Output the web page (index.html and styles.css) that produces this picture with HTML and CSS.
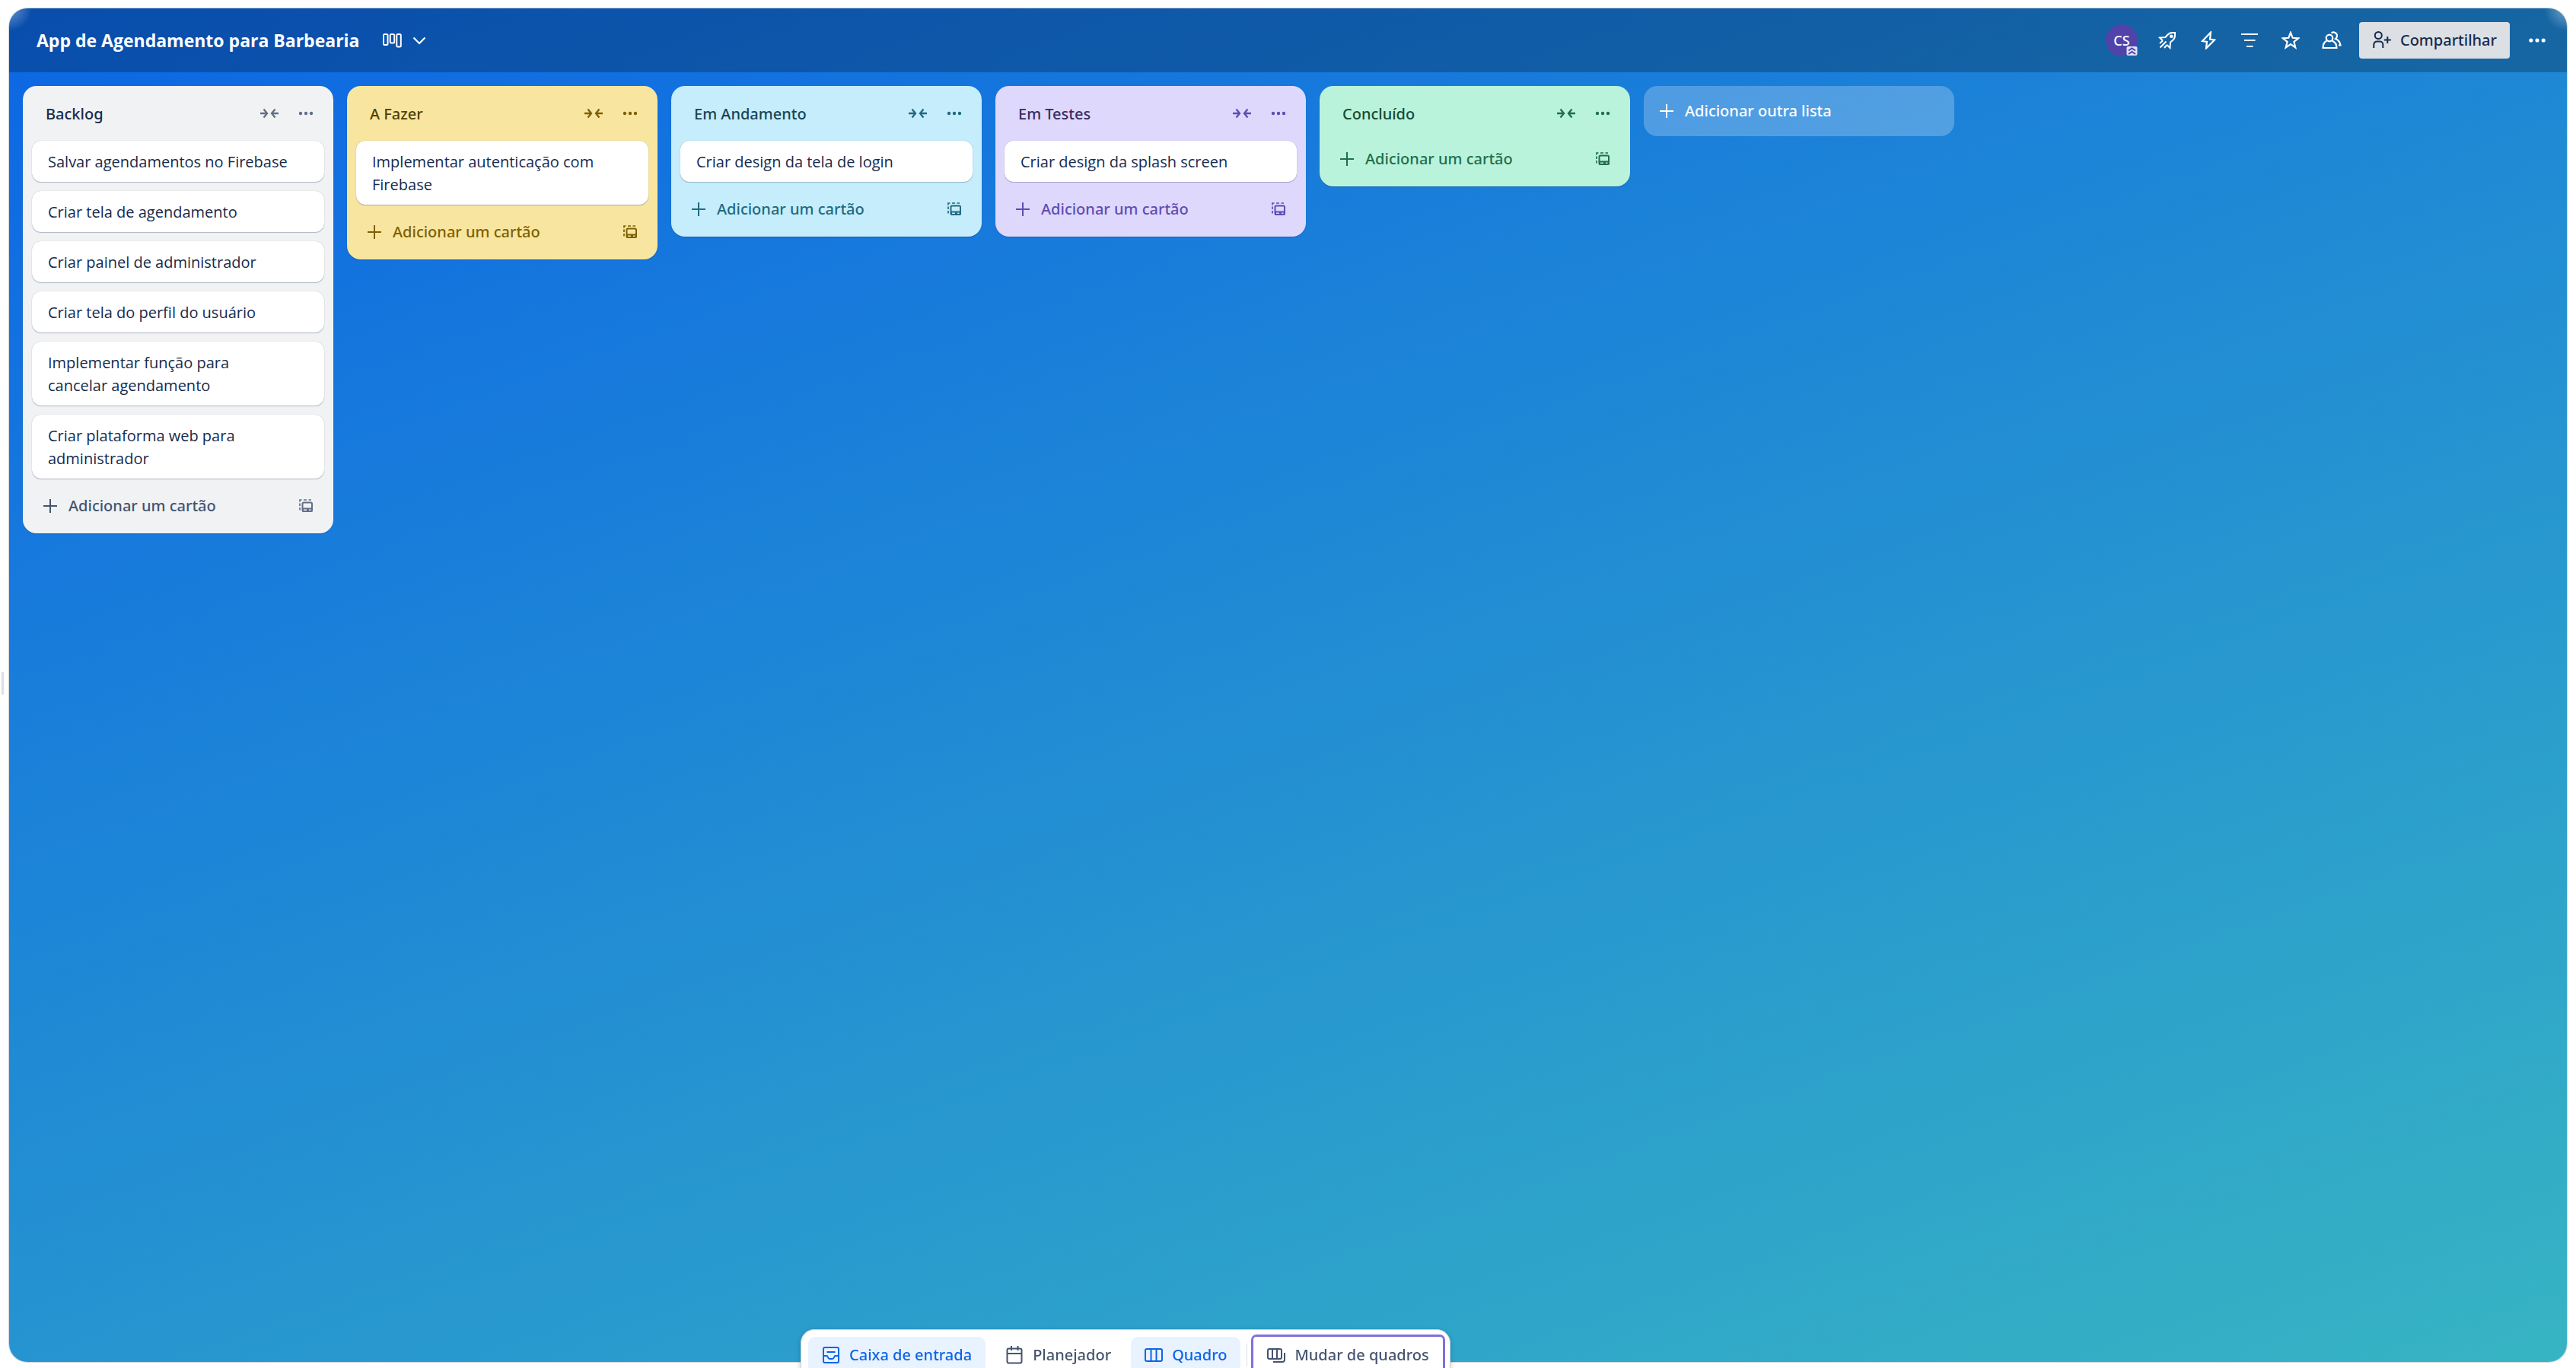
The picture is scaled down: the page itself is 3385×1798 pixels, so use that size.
FILE: index.html
```html
<!DOCTYPE html>
<html lang="pt-BR">
<head>
<meta charset="utf-8">
<meta name="viewport" content="width=device-width, initial-scale=1">
<title>App de Agendamento para Barbearia</title>
<link rel="stylesheet" href="styles.css">
</head>
<body>
<svg class="sprite" aria-hidden="true">
  <symbol id="i-collapse" viewBox="0 0 24 24"><path d="M0 12h8M4.500 6.500L9 12l-4.500 5.500M24 12h-8M19.500 6.500L15 12l4.500 5.500" stroke-width="2.300"/></symbol>
  <symbol id="i-dots" viewBox="0 0 24 24"><g fill="currentColor" stroke="none"><circle cx="5" cy="12" r="2.200"/><circle cx="12" cy="12" r="2.200"/><circle cx="19" cy="12" r="2.200"/></g></symbol>
  <symbol id="i-plus" viewBox="0 0 24 24"><path d="M12 3v18M3 12h18" stroke-width="2"/></symbol>
  <symbol id="i-template" viewBox="0 0 24 24"><path d="M4 17.500v-3.500M4 12V8.500M4 6.500V4h2.500M9 4h4M15.500 4H19" stroke-width="1.700"/><rect x="7.500" y="7.500" width="12.500" height="11.500" rx="1.500" stroke-width="2"/><path d="M7 14.500h13.500v5H7zM9 16.500v1.500h4v-1.500zM16 16.500v1.500h2.500v-1.500z" fill="currentColor" fill-rule="evenodd" stroke="none"/></symbol>
  <symbol id="i-board" viewBox="0 0 27 24"><g stroke-width="2"><rect x="2" y="4" width="5.500" height="14" rx="1.500"/><rect x="10.700" y="4" width="5.500" height="11.500" rx="1.500"/><rect x="19.300" y="4" width="5.500" height="16.500" rx="1.500"/></g></symbol>
  <symbol id="i-chevron" viewBox="0 0 24 24"><path d="M4.500 8.500l7.500 7.500 7.500-7.500" stroke-width="2.200"/></symbol>
  <symbol id="i-rocket" viewBox="0 0 24 24"><g stroke-width="2"><path d="M6 12.500L2 8.500l7.500-.5L12 5c2-2.300 4-3 6.500-3H22v3.500c0 2.500-.8 4.500-3 6.500l-3 2.500-.5 7.500-4-4"/><path d="M6 12.500l-4 3.500M10.500 13.500L2.500 21.500M11.500 18L8 22"/><circle cx="17.300" cy="6.800" r="1.300"/></g></symbol>
  <symbol id="i-bolt" viewBox="0 0 24 24"><path d="M15 1.500L4 13l6 1-1 8.500L20 11.500l-6-1z" stroke-width="2.200"/></symbol>
  <symbol id="i-filter" viewBox="0 0 24 24"><path d="M1 4h22M5 12h14.500M8 20h8.500" stroke-width="2.200"/></symbol>
  <symbol id="i-star" viewBox="0 0 24 24"><path d="M12 1.800l2.700 7 7.500.4-5.800 4.700 1.900 7.600L12 17.200l-6.300 4.300 1.900-7.600L1.800 9.200l7.500-.4z" stroke-width="2.200"/></symbol>
  <symbol id="i-people" viewBox="0 0 26 24"><g stroke-width="2.200"><circle cx="10" cy="9" r="4.300"/><path d="M6.500 12.500C3.500 14 1.500 17.500 1.500 22h18c0-4.500-2.500-8-6-9.500"/><path d="M12.500 2.500c3-2.300 7.500-.5 7.500 3.500 0 1.800-.7 3-2 4 3.500 1.500 6 4.500 6.500 8.500h-2.500"/></g></symbol>
  <symbol id="i-invite" viewBox="0 0 24 24"><path d="M1.300 22v-4.500a4 4 0 0 1 4-4h4a4 4 0 0 1 4 4V22M19.300 7v9M14.800 11.500h9" stroke-width="2"/><circle cx="7.300" cy="5.500" r="4.500" stroke-width="2"/></symbol>
  <symbol id="i-inbox" viewBox="0 0 24 24"><g stroke-width="2"><rect x="2" y="2" width="20" height="20" rx="2"/><path d="M6.500 8h11M2 13h4.500c1.500 0 1.500 4 3.500 4h4c2 0 2-4 3.500-4H22"/></g></symbol>
  <symbol id="i-calendar" viewBox="0 0 24 24"><g stroke-width="2"><rect x="2.500" y="3.500" width="19" height="19" rx="2"/><path d="M2.500 10h19M8 0v6M16.500 0v6"/></g></symbol>
  <symbol id="i-columns" viewBox="0 0 24 24"><g stroke-width="2"><rect x="1" y="4" width="22" height="16" rx="2"/><path d="M8.500 4v16M15.500 4v16"/></g></symbol>
  <symbol id="i-switch" viewBox="0 0 24 24"><g stroke-width="2"><rect x="1" y="4" width="18" height="13" rx="2"/><path d="M7 4v13M13 4v13M23 9v9a3 3 0 0 1-3 3H8"/></g></symbol>
</svg>

<span class="drag-handle"></span>

<main class="board">
  <header class="topbar">
    <h1 class="board-name">App de Agendamento para Barbearia</h1>
    <button class="view-switch" type="button" aria-label="Visualizações">
      <svg class="icon icon-board"><use href="#i-board"/></svg>
      <svg class="icon"><use href="#i-chevron"/></svg>
    </button>
    <div class="tools">
      <button class="avatar" type="button" aria-label="Membro CS">CS
        <svg class="avatar-badge" viewBox="0 0 14 12"><rect width="14" height="12" rx="2"/><path d="M2.500 5.500L7 2.500l4.500 3M2.500 10L7 7l4.500 3"/></svg>
      </button>
      <button class="icon-btn" type="button" aria-label="Power-Ups"><svg class="icon"><use href="#i-rocket"/></svg></button>
      <button class="icon-btn" type="button" aria-label="Automação"><svg class="icon"><use href="#i-bolt"/></svg></button>
      <button class="icon-btn" type="button" aria-label="Filtros"><svg class="icon"><use href="#i-filter"/></svg></button>
      <button class="icon-btn" type="button" aria-label="Favoritar"><svg class="icon"><use href="#i-star"/></svg></button>
      <button class="icon-btn" type="button" aria-label="Visibilidade"><svg class="icon icon-people"><use href="#i-people"/></svg></button>
      <button class="share" type="button"><svg class="icon"><use href="#i-invite"/></svg>Compartilhar</button>
      <button class="icon-btn" type="button" aria-label="Menu"><svg class="icon icon-menu"><use href="#i-dots"/></svg></button>
    </div>
  </header>

  <div class="lists">
    <section class="list">
      <header class="list-head">
        <h2 class="list-name">Backlog</h2>
        <button class="icon-btn" type="button" aria-label="Recolher lista"><svg class="icon"><use href="#i-collapse"/></svg></button>
        <button class="icon-btn" type="button" aria-label="Ações da lista"><svg class="icon"><use href="#i-dots"/></svg></button>
      </header>
      <ol class="cards">
        <li class="card">Salvar agendamentos no Firebase</li>
        <li class="card">Criar tela de agendamento</li>
        <li class="card">Criar painel de administrador</li>
        <li class="card">Criar tela do perfil do usuário</li>
        <li class="card">Implementar função para cancelar agendamento</li>
        <li class="card">Criar plataforma web para administrador</li>
      </ol>
      <footer class="list-foot">
        <button class="add-card" type="button"><svg class="icon"><use href="#i-plus"/></svg>Adicionar um cartão</button>
        <button class="icon-btn" type="button" aria-label="Criar de modelo"><svg class="icon"><use href="#i-template"/></svg></button>
      </footer>
    </section>

    <section class="list list-yellow">
      <header class="list-head">
        <h2 class="list-name">A Fazer</h2>
        <button class="icon-btn" type="button" aria-label="Recolher lista"><svg class="icon"><use href="#i-collapse"/></svg></button>
        <button class="icon-btn" type="button" aria-label="Ações da lista"><svg class="icon"><use href="#i-dots"/></svg></button>
      </header>
      <ol class="cards">
        <li class="card">Implementar autenticação com Firebase</li>
      </ol>
      <footer class="list-foot">
        <button class="add-card" type="button"><svg class="icon"><use href="#i-plus"/></svg>Adicionar um cartão</button>
        <button class="icon-btn" type="button" aria-label="Criar de modelo"><svg class="icon"><use href="#i-template"/></svg></button>
      </footer>
    </section>

    <section class="list list-sky">
      <header class="list-head">
        <h2 class="list-name">Em Andamento</h2>
        <button class="icon-btn" type="button" aria-label="Recolher lista"><svg class="icon"><use href="#i-collapse"/></svg></button>
        <button class="icon-btn" type="button" aria-label="Ações da lista"><svg class="icon"><use href="#i-dots"/></svg></button>
      </header>
      <ol class="cards">
        <li class="card">Criar design da tela de login</li>
      </ol>
      <footer class="list-foot">
        <button class="add-card" type="button"><svg class="icon"><use href="#i-plus"/></svg>Adicionar um cartão</button>
        <button class="icon-btn" type="button" aria-label="Criar de modelo"><svg class="icon"><use href="#i-template"/></svg></button>
      </footer>
    </section>

    <section class="list list-purple">
      <header class="list-head">
        <h2 class="list-name">Em Testes</h2>
        <button class="icon-btn" type="button" aria-label="Recolher lista"><svg class="icon"><use href="#i-collapse"/></svg></button>
        <button class="icon-btn" type="button" aria-label="Ações da lista"><svg class="icon"><use href="#i-dots"/></svg></button>
      </header>
      <ol class="cards">
        <li class="card">Criar design da splash screen</li>
      </ol>
      <footer class="list-foot">
        <button class="add-card" type="button"><svg class="icon"><use href="#i-plus"/></svg>Adicionar um cartão</button>
        <button class="icon-btn" type="button" aria-label="Criar de modelo"><svg class="icon"><use href="#i-template"/></svg></button>
      </footer>
    </section>

    <section class="list list-green">
      <header class="list-head">
        <h2 class="list-name">Concluído</h2>
        <button class="icon-btn" type="button" aria-label="Recolher lista"><svg class="icon"><use href="#i-collapse"/></svg></button>
        <button class="icon-btn" type="button" aria-label="Ações da lista"><svg class="icon"><use href="#i-dots"/></svg></button>
      </header>
      <footer class="list-foot">
        <button class="add-card" type="button"><svg class="icon"><use href="#i-plus"/></svg>Adicionar um cartão</button>
        <button class="icon-btn" type="button" aria-label="Criar de modelo"><svg class="icon"><use href="#i-template"/></svg></button>
      </footer>
    </section>

    <button class="add-list" type="button"><svg class="icon"><use href="#i-plus"/></svg>Adicionar outra lista</button>
  </div>
</main>

<nav class="dock" aria-label="Navegação">
  <button class="dock-item is-active" type="button"><svg class="icon"><use href="#i-inbox"/></svg>Caixa de entrada</button>
  <button class="dock-item" type="button"><svg class="icon"><use href="#i-calendar"/></svg>Planejador</button>
  <button class="dock-item is-active" type="button"><svg class="icon"><use href="#i-columns"/></svg>Quadro</button>
  <span class="dock-divider"></span>
  <button class="dock-item is-outlined" type="button"><svg class="icon"><use href="#i-switch"/></svg>Mudar de quadros</button>
</nav>
</body>
</html>
```
FILE: styles.css
```css
* { box-sizing: border-box; }

body {
  display: flex;
  height: 100vh;
  margin: 0;
  padding: 11px 12px 8px;
  overflow: hidden;
  background: #fff;
  color: #172b4d;
  font: 500 20px/30px "Noto Sans", sans-serif;
}

h1, h2, ol { margin: 0; padding: 0; }

button {
  display: flex;
  align-items: center;
  padding: 0;
  border: 0;
  background: none;
  color: inherit;
  font: inherit;
  white-space: nowrap;
  cursor: pointer;
}

.sprite { position: absolute; width: 0; height: 0; }

.icon {
  flex: none;
  width: 24px;
  height: 24px;
  fill: none;
  stroke: currentColor;
}
.icon-board { width: 27px; }
.icon-people { width: 26px; }
.icon-menu { width: 28px; height: 28px; }

.icon-btn {
  flex: none;
  justify-content: center;
  width: 48px;
  height: 48px;
}

.drag-handle {
  position: absolute;
  top: 883px;
  left: 2px;
  width: 3px;
  height: 30px;
  border-radius: 1px;
  background: #dcdfe4;
}

.board {
  flex: 1;
  min-width: 0;
  overflow: hidden;
  border-radius: 24px;
  background: linear-gradient(160deg, #0c66e4, #37b4c3);
  box-shadow: 0 0 0 1px #cfd4db;
}

.topbar {
  display: flex;
  align-items: center;
  height: 84px;
  padding: 0 15px 0 36px;
  background:
    radial-gradient(circle at 0 0, #ffffff66, #ffffff00 30px),
    radial-gradient(circle at 100% 0, #ffffff66, #ffffff00 30px),
    #0000003d;
  color: #fff;
}

.board-name { font: 700 23px/30px "Open Sans", sans-serif; }

.view-switch { gap: 10px; margin-left: 29px; }

.tools {
  display: flex;
  align-items: center;
  gap: 6px;
  margin-left: auto;
}

.avatar {
  position: relative;
  justify-content: center;
  width: 42px;
  height: 42px;
  margin-right: 9px;
  border-radius: 50%;
  background: #5243aa;
  font-size: 18px;
}
.avatar-badge {
  position: absolute;
  right: 0;
  bottom: 1px;
  width: 15px;
  height: 12px;
  fill: #dfe1f5;
  stroke: #5243aa;
  stroke-width: 2;
}
.avatar-badge rect { stroke: none; }
.avatar-badge path { fill: none; }

.share {
  gap: 12px;
  height: 48px;
  margin: 0 6px;
  padding: 0 17px 0 18px;
  border-radius: 4px;
  background: #dcdfe4;
  color: #172b4d;
}

.lists {
  display: flex;
  align-items: flex-start;
  gap: 18px;
  padding: 18px;
}

.list {
  --surface: #f1f2f4;
  --title: #172b4d;
  --accent: #44546f;
  --icon: #626f86;
  flex: none;
  width: 408px;
  border-radius: 18px;
  background: var(--surface);
  box-shadow: 0 1px 1px #091e4240;
  color: var(--accent);
}
.list .icon-btn { color: var(--icon); }
.list-yellow { --surface: #f8e6a0; --title: #533f04; --accent: #7f5f01; --icon: #7f5f01; }
.list-sky { --surface: #c6edfb; --title: #164555; --accent: #206a83; --icon: #206a83; }
.list-purple { --surface: #dfd8fd; --title: #352c63; --accent: #5e4db2; --icon: #5e4db2; }
.list-green { --surface: #baf3db; --title: #164b35; --accent: #216e4e; --icon: #216e4e; }

.list-head {
  display: flex;
  align-items: center;
  padding: 12px 12px 0 30px;
}
.list-name {
  flex: 1;
  padding-top: 2px;
  color: var(--title);
  font-size: 20px;
  font-weight: 500;
}

.cards { list-style: none; }
.card {
  margin: 12px 12px 0;
  padding: 13px 44px 11px 21px;
  border-radius: 12px;
  background: #fff;
  box-shadow: 0 1px 1px #091e4240, 0 0 1px #091e424f;
  color: #172b4d;
  font-family: "Open Sans", sans-serif;
  font-weight: 400;
}

.list-foot {
  display: flex;
  padding: 12px;
}
.add-card {
  flex: 1;
  gap: 12px;
  height: 48px;
  padding-left: 12px;
}

.add-list {
  flex: none;
  gap: 12px;
  width: 408px;
  height: 66px;
  padding: 0 18px;
  border-radius: 18px;
  background: #ffffff3d;
  color: #fff;
}

/* The dock floats over the board and runs past the window's lower edge. */
.dock {
  position: fixed;
  bottom: -17px;
  left: 1052px;
  display: flex;
  gap: 8px;
  padding: 9px;
  border: 1px solid #cfd4db;
  border-radius: 18px;
  background: #fff;
  box-shadow: 0 2px 6px #091e4240;
}
.dock-item {
  gap: 12px;
  height: 48px;
  padding: 0 18px;
  border-radius: 9px;
  color: #44546f;
}
.dock-item.is-active { background: #e9f2ff; color: #0c66e4; }
.dock-item.is-outlined {
  border-radius: 4px;
  box-shadow: 0 0 0 3px #8270db;
}
.dock-divider {
  width: 1px;
  margin: 9px 0;
  background: #dcdfe4;
}
```
